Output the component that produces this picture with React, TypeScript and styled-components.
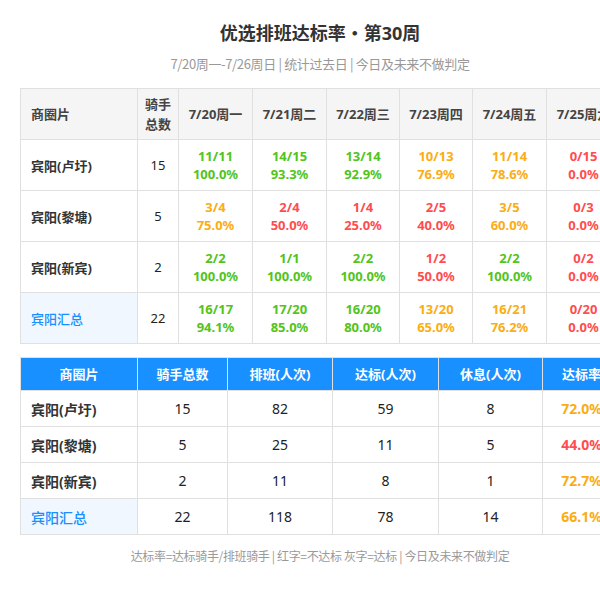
import styled, { createGlobalStyle } from "styled-components";

type Level = "good" | "warn" | "bad";

interface DayCell {
  done: number;
  total: number;
}

interface AreaRow {
  name: string;
  riders: number;
  days: DayCell[];
  summary?: boolean;
}

interface WeekRow {
  name: string;
  riders: number;
  shifts: number;
  passed: number;
  rest: number;
  summary?: boolean;
}

const dates = [
  "7/20周一",
  "7/21周二",
  "7/22周三",
  "7/23周四",
  "7/24周五",
  "7/25周六",
  "7/26周日",
];

const dateWidths = [74, 74, 73, 73, 74, 74, 74];

const d = (done: number, total: number): DayCell => ({ done, total });

const areas: AreaRow[] = [
  {
    name: "宾阳(卢圩)",
    riders: 15,
    days: [d(11, 11), d(14, 15), d(13, 14), d(10, 13), d(11, 14), d(0, 15), d(0, 15)],
  },
  {
    name: "宾阳(黎塘)",
    riders: 5,
    days: [d(3, 4), d(2, 4), d(1, 4), d(2, 5), d(3, 5), d(0, 3), d(0, 3)],
  },
  {
    name: "宾阳(新宾)",
    riders: 2,
    days: [d(2, 2), d(1, 1), d(2, 2), d(1, 2), d(2, 2), d(0, 2), d(0, 2)],
  },
  {
    name: "宾阳汇总",
    riders: 22,
    summary: true,
    days: [d(16, 17), d(17, 20), d(16, 20), d(13, 20), d(16, 21), d(0, 20), d(0, 20)],
  },
];

const weeks: WeekRow[] = [
  { name: "宾阳(卢圩)", riders: 15, shifts: 82, passed: 59, rest: 8 },
  { name: "宾阳(黎塘)", riders: 5, shifts: 25, passed: 11, rest: 5 },
  { name: "宾阳(新宾)", riders: 2, shifts: 11, passed: 8, rest: 1 },
  { name: "宾阳汇总", riders: 22, shifts: 118, passed: 78, rest: 14, summary: true },
];

const levelOf = (rate: number): Level => {
  if (rate >= 0.8) return "good";
  if (rate >= 0.6) return "warn";
  return "bad";
};

const weekLevel = (rate: number): Level => (rate >= 0.6 ? "warn" : "bad");

const levelColor: Record<Level, string> = {
  good: "#52c41a",
  warn: "#faad14",
  bad: "#ff4d4f",
};

const App = () => {
  return (
    <>
      <GlobalStyle />
      <Page>
        <Title>优选排班达标率・第30周</Title>
        <Subtitle>7/20周一-7/26周日 | 统计过去日 | 今日及未来不做判定</Subtitle>

        <DailyTable>
          <colgroup>
            <col style={{ width: 117 }} />
            <col style={{ width: 41 }} />
            {dateWidths.map((w, i) => (
              <col key={i} style={{ width: w }} />
            ))}
          </colgroup>
          <thead>
            <tr>
              <DailyHead $left>商圈片</DailyHead>
              <DailyHead>
                骑手
                <br />
                总数
              </DailyHead>
              {dates.map((date) => (
                <DailyHead key={date}>{date}</DailyHead>
              ))}
            </tr>
          </thead>
          <tbody>
            {areas.map((row) => (
              <tr key={row.name}>
                <NameCell $summary={row.summary}>{row.name}</NameCell>
                <CountCell>{row.riders}</CountCell>
                {row.days.map((day, i) => {
                  const rate = day.total ? day.done / day.total : 0;
                  return (
                    <RateCell key={i} $level={levelOf(rate)}>
                      {day.done}/{day.total}
                      <br />
                      {(rate * 100).toFixed(1)}%
                    </RateCell>
                  );
                })}
              </tr>
            ))}
          </tbody>
        </DailyTable>

        <WeekTable>
          <colgroup>
            <col style={{ width: 117 }} />
            <col style={{ width: 90 }} />
            <col style={{ width: 105 }} />
            <col style={{ width: 106 }} />
            <col style={{ width: 104 }} />
            <col style={{ width: 78 }} />
          </colgroup>
          <thead>
            <tr>
              <WeekHead>商圈片</WeekHead>
              <WeekHead>骑手总数</WeekHead>
              <WeekHead>排班(人次)</WeekHead>
              <WeekHead>达标(人次)</WeekHead>
              <WeekHead>休息(人次)</WeekHead>
              <WeekHead>达标率</WeekHead>
            </tr>
          </thead>
          <tbody>
            {weeks.map((row) => {
              const rate = row.passed / row.shifts;
              return (
                <tr key={row.name}>
                  <WeekName $summary={row.summary}>{row.name}</WeekName>
                  <WeekValue>{row.riders}</WeekValue>
                  <WeekValue>{row.shifts}</WeekValue>
                  <WeekValue>{row.passed}</WeekValue>
                  <WeekValue>{row.rest}</WeekValue>
                  <WeekRate $level={weekLevel(rate)}>
                    {(rate * 100).toFixed(1)}%
                  </WeekRate>
                </tr>
              );
            })}
          </tbody>
        </WeekTable>

        <Footnote>
          达标率=达标骑手/排班骑手 | 红字=不达标 灰字=达标 | 今日及未来不做判定
        </Footnote>
      </Page>
    </>
  );
};

export default App;

const GlobalStyle = createGlobalStyle`
  html, body {
    margin: 0;
    padding: 0;
    overflow: hidden;
    background: #fff;
  }

  body {
    font-family: "Noto Sans", "Noto Sans CJK SC", sans-serif;
    color: #222;
  }
`;

const Page = styled.div`
  width: 600px;
  padding: 20px 20px 20px;
`;

const Title = styled.h1`
  margin: 0;
  font-size: 18px;
  line-height: 26px;
  font-weight: 700;
  color: #333;
  text-align: center;
  font-family: "Noto Sans", "Noto Sans CJK SC", sans-serif;
`;

const Subtitle = styled.div`
  margin-top: 8px;
  font-size: 13px;
  line-height: 20px;
  letter-spacing: -0.35px;
  color: #999;
  text-align: center;
  font-family: "Noto Sans CJK SC", sans-serif;
`;

const DailyTable = styled.table`
  margin-top: 14px;
  border-collapse: collapse;
  table-layout: fixed;
  width: 674px;
  font-size: 13px;

  td,
  th {
    border: 1px solid #e0e0e0;
    height: 51px;
    padding: 0 4px;
    box-sizing: border-box;
  }
`;

const DailyHead = styled.th<{ $left?: boolean }>`
  background: #f5f5f5;
  color: #444;
  font-weight: 700;
  line-height: 20px;
  text-align: ${(p) => (p.$left ? "left" : "center")};
  padding-left: ${(p) => (p.$left ? "10px" : "4px")} !important;
  white-space: nowrap;
`;

const NameCell = styled.td<{ $summary?: boolean }>`
  text-align: left;
  padding-left: 10px !important;
  font-weight: ${(p) => (p.$summary ? 500 : 700)};
  color: ${(p) => (p.$summary ? "#1890ff" : "#333")};
  background: ${(p) => (p.$summary ? "#f0f7ff" : "#fff")};
`;

const CountCell = styled.td`
  text-align: center;
  color: #222;
`;

const RateCell = styled.td<{ $level: Level }>`
  text-align: center;
  font-weight: 700;
  line-height: 18px;
  color: ${(p) => levelColor[p.$level]};
  white-space: nowrap;
`;

const WeekTable = styled.table`
  margin-top: 13px;
  border-collapse: collapse;
  table-layout: fixed;
  width: 600px;
  font-size: 14px;

  td,
  th {
    border: 1px solid #e0e0e0;
    height: 36px;
    padding: 0 4px;
    box-sizing: border-box;
  }
`;

const WeekHead = styled.th`
  height: 33px !important;
  line-height: 18px;
  background: #1890ff;
  color: #fff;
  font-size: 13px;
  font-weight: 700;
  text-align: center;
  white-space: nowrap;
`;

const WeekName = styled.td<{ $summary?: boolean }>`
  text-align: left;
  padding-left: 10px !important;
  font-weight: ${(p) => (p.$summary ? 500 : 700)};
  color: ${(p) => (p.$summary ? "#1890ff" : "#333")};
  background: ${(p) => (p.$summary ? "#f0f7ff" : "#fff")};
`;

const WeekValue = styled.td`
  text-align: center;
  color: #222;
`;

const WeekRate = styled.td<{ $level: Level }>`
  text-align: center;
  font-weight: 700;
  color: ${(p) => levelColor[p.$level]};
  white-space: nowrap;
`;

const Footnote = styled.div`
  margin-top: 12px;
  font-size: 12px;
  line-height: 18px;
  letter-spacing: -0.35px;
  color: #999;
  text-align: center;
  font-family: "Noto Sans CJK SC", sans-serif;
`;
